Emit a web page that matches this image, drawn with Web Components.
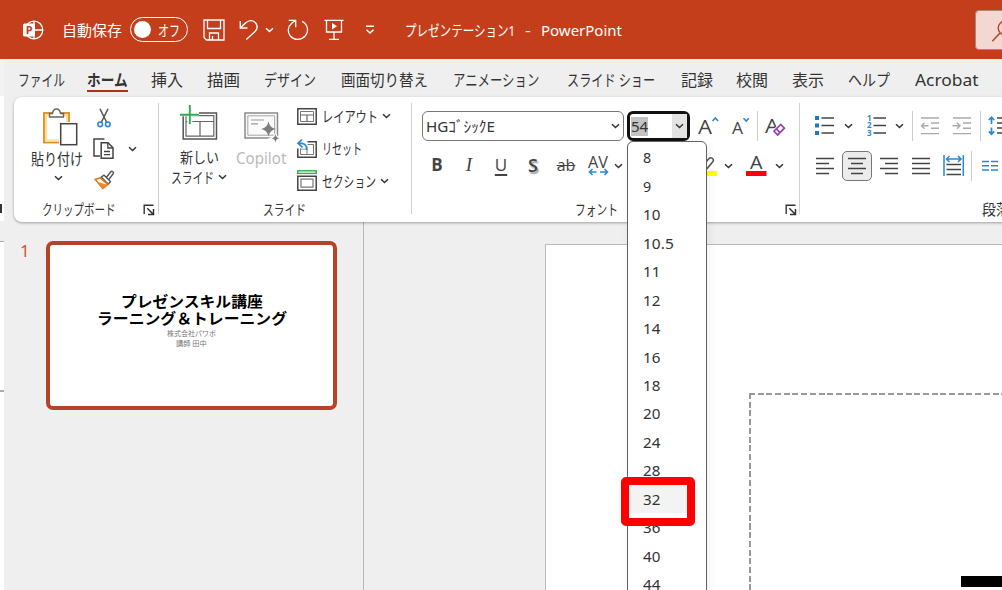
<!DOCTYPE html>
<html lang="ja">
<head>
<meta charset="utf-8">
<title>プレゼンテーション1 - PowerPoint</title>
<style>
  body {
    margin: 0;
    width: 1002px;
    height: 590px;
    overflow: hidden;
    background: #efefef;
    color: #333;
    font: 15px/20px "Noto Sans", "Noto Sans CJK JP", sans-serif;
  }
</style>
</head>
<body>
<office-window></office-window>

<script>
const chev = '<path d="M1 1.2L4.5 4.5 8 1.2" fill="none" stroke="currentColor" stroke-width="1.5"/>';
const monitor = '<path d="M.8.8H19.2V16.2H.8Z" fill="#fff" stroke="#444" stroke-width="1.5"/><path d="M3.5 3.5H16.5V13.5H3.5Z" fill="none" stroke="#777"/>';

// name: [width, height, markup]
const ICONS = {
  chevron: [9, 6, chev],
  logo: [22, 22, '<circle cx="12" cy="11" r="8.8" fill="none" stroke="#fff" stroke-width="1.3"/><path d="M12 2V20M12 11H21" stroke="#fff" stroke-width="1.3"/><rect x="1" y="4.5" width="12" height="13" rx="1.5" fill="#fff"/><text x="3.8" y="15" font-size="11" font-weight="bold" style="fill:#c43e1c">P</text>'],
  save: [22, 22, '<path d="M1 1H21V21H3.5L1 18.5ZM4.5 1.5V9.5H17.5V1.5M6.5 21V14H15.5V21M9.5 21V17" fill="none" stroke="#fff" stroke-width="1.3"/>'],
  undo: [20, 22, '<path d="M1.3 2V9H8.5M1.5 8.8L6.5 4C10 .7 14.5 1 16.8 4.2C19 7.3 18.2 10.5 15.5 13L7.3 20.5" fill="none" stroke="#fff" stroke-width="1.4"/>'],
  redo: [22, 22, '<path d="M1.7 1.3H8.7V8.2M8.5 1.5L4.7 4.3C.5 8 .2 13.5 3.5 17.2C7.5 21.5 14.5 21.3 18.2 17C22.3 12 20.7 5 15 2.3" fill="none" stroke="#fff" stroke-width="1.3"/>'],
  present: [20, 22, '<path d="M.5 1.3H19.5M2.5 1.3V13H17.5V1.3M10 13V20M5 20.3H15" fill="none" stroke="#fff" stroke-width="1.3"/><path d="M8 4L13 7.2L8 10.4Z" fill="#fff"/>'],
  qat: [10, 10, '<path d="M1 1.2H9M1.5 4.7L5 8L8.5 4.7" fill="none" stroke="#fff" stroke-width="1.5"/>'],
  search: [24, 24, '<circle cx="14" cy="8" r="6.8" fill="none" stroke="#b7472a" stroke-width="1.4"/><path d="M9 13L1.3 21.2" stroke="#b7472a" stroke-width="1.6"/>'],
  launcher: [12, 12, '<path d="M1.2 10V1.2H10.5" fill="none" stroke="#333" stroke-width="1.4"/><path d="M4.3 4.3L10 10M10.5 5V10.5H5" fill="none" stroke="#333" stroke-width="1.5"/>'],
  paste: [35, 38, '<rect x="1" y="5" width="25" height="29.5" fill="#fff" stroke="#dc8a17" stroke-width="1.8"/><rect x="3" y="7" width="21" height="25.5" fill="none" stroke="#fbdfa1" stroke-width="2.2"/><path d="M6.5 9V5.5H9.5C10 2.4 11.5 1 13.5 1S17 2.4 17.5 5.5H20.5V9Z" fill="#fff" stroke="#666" stroke-width="1.4"/><rect x="16" y="14" width="19" height="24" fill="#fff"/><rect x="17.7" y="15.7" width="16" height="21" fill="#fff" stroke="#444" stroke-width="1.5"/>'],
  cut: [14, 20, '<path d="M3 .8L9.8 14.5M11 .8L4.2 14.5" fill="none" stroke="#555" stroke-width="1.5"/><circle cx="3.2" cy="16.3" r="2.3" fill="#fff" stroke="#2b88d0" stroke-width="1.6"/><circle cx="10.8" cy="16.3" r="2.3" fill="#fff" stroke="#2b88d0" stroke-width="1.6"/>'],
  copy: [22, 22, '<path d="M7 18H1V1H11.5" fill="none" stroke="#444" stroke-width="1.5"/><path d="M8.2 4.8H15L20 9.8V20.3H8.2Z" fill="#fff" stroke="#444" stroke-width="1.5"/><path d="M14.8 5V10H20M11 13.5H17M11 16.6H17" fill="none" stroke="#444" stroke-width="1.3"/>'],
  brush: [21, 20, '<path d="M11.5 8.5L16.8 1.8C18 .5 20.3 2.3 19.2 3.8L14 10.5" fill="#fff" stroke="#555" stroke-width="1.4"/><path d="M7.2 7L10 5.2L16.5 11.5L14.3 14.2Z" fill="#fff" stroke="#555" stroke-width="1.3"/><path d="M6.2 7.8L1.2 9.5L8.8 18.5L13.8 14.4Z" fill="#fff" stroke="#e07b1a" stroke-width="1.6"/><path d="M3 11.8L12.5 14.5L9 18.3Z" fill="#ef8a26"/>'],
  newslide: [38, 36, '<path d="M3.2 8H36.5V34H3.2Z" fill="#fff" stroke="#555" stroke-width="1.5"/><path d="M6 10.7H33.8V31.2H6ZM6 16.5H34M20 16.5V31" fill="none" stroke="#666" stroke-width="1.2"/><path d="M1 8.8H19M9.8 0V19" stroke="#fff" stroke-width="5"/><path d="M0 9.8H19M9.8 0V19" stroke="#36a853" stroke-width="1.9"/>'],
  copilot: [36, 32, '<path d="M1 1H33.5V26H1Z" fill="#fafafa" stroke="#8a8a8a" stroke-width="1.5"/><path d="M3.8 3.8H30.7V23.2H3.8Z" fill="none" stroke="#a5a5a5"/><path d="M7 8H20M7 11.8H14" stroke="#999" stroke-width="1.2"/><path d="M24.5 9.5C25.8 14.2 27.2 15.6 32 17C27.2 18.4 25.8 19.8 24.5 24.5C23.2 19.8 21.8 18.4 17 17C21.8 15.6 23.2 14.2 24.5 9.5Z" fill="#7d7d7d"/><path d="M31.5 22C32.2 24.8 32.8 25.5 35.5 26.2C32.8 26.9 32.2 27.6 31.5 30.5C30.8 27.6 30.2 26.9 27.5 26.2C30.2 25.5 30.8 24.8 31.5 22Z" fill="#7d7d7d" stroke="#fff" stroke-width="2" paint-order="stroke"/>'],
  layout: [20, 17, monitor + '<path d="M3.5 7H16.5M10 7V13.5" stroke="#666" stroke-width="1.2"/>'],
  reset: [20, 19, '<g transform="translate(0 2)">' + monitor + '<path d="M10 5V13M3.5 8H9" stroke="#777"/></g><rect width="10.5" height="9.5" fill="#fff"/><path d="M5 .5L1 4.3L5.5 8.3M1.5 4.3H4.5C8.3 4.5 10 7 9.7 11" fill="none" stroke="#2b88d0" stroke-width="1.7"/>'],
  section: [20, 21, '<rect x=".8" y=".8" width="18.4" height="2.6" fill="#fff" stroke="#36a853" stroke-width="1.4"/><path d="M.8 6.2H19.2V20.2H.8Z" fill="#fff" stroke="#444" stroke-width="1.5"/><path d="M4 9.2H16V17.2H4Z" fill="none" stroke="#777" stroke-width="1.2"/>'],
  grow: [22, 20, '<text x="0" y="17.5" font-size="20.5" textLength="14" lengthAdjust="spacingAndGlyphs">A</text><path d="M14.5 5L17.3 2L20.1 5" fill="none" stroke="#2b88d0" stroke-width="1.6"/>'],
  shrink: [18, 20, '<text x="0" y="17.5" font-size="16.5" textLength="11" lengthAdjust="spacingAndGlyphs">A</text><path d="M11.5 2.2L14.2 5L16.9 2.2" fill="none" stroke="#2b88d0" stroke-width="1.6"/>'],
  clear: [22, 22, '<text x="0" y="18" font-size="20.5" textLength="14" lengthAdjust="spacingAndGlyphs">A</text><path d="M8.8 15.8L16 9.3L19.6 13L12.5 20Z" fill="#fff" stroke="#fff" stroke-width="3"/><path d="M9 16L15.8 9.5L19.4 13.2L12.6 20ZM11.4 13.8L15 17.6" fill="#fff" stroke="#9b3fa8" stroke-width="1.7"/>'],
  spacing: [22, 22, '<text x="0" y="12.5" font-size="15.5" textLength="20" lengthAdjust="spacingAndGlyphs">AV</text><path d="M1.5 17H19.5M4.5 14L1.5 17L4.5 20M16.5 14L19.5 17L16.5 20" fill="none" stroke="#2b88d0" stroke-width="1.6"/><path d="M8.5 15.5H12V18.5H8.5Z" fill="#fff"/>'],
  marker: [22, 22, '<path d="M4 14L13 3.5C15 1.5 18.5 3.8 17 6.500L9 16Z" fill="#fff" stroke="#555" stroke-width="1.5"/><rect x="0" y="16" width="21" height="5" fill="#ff0"/>'],
  fontcolor: [21, 22, '<text x="4" y="13.5" font-size="18" textLength="12.5" lengthAdjust="spacingAndGlyphs">A</text><rect x="0" y="16" width="20.5" height="5" fill="#f00"/>'],
  bullets: [20, 20, '<path d="M0 0H4V4H0ZM0 7.5H4V11.5H0ZM0 15H4V19H0Z" fill="#2077bd"/><path d="M6.5 2H19M6.5 9.5H19M6.5 17H19" stroke="#444" stroke-width="1.6"/>'],
  numbers: [20, 22, '<g font-size="8" font-weight="bold" fill="#2b88d0"><text x="0" y="5.8">1</text><text x="0" y="13.4">2</text><text x="0" y="21">3</text></g><path d="M6.5 3H19M6.5 10.5H19M6.5 18H19" stroke="#444" stroke-width="1.6"/>'],
  outdent: [20, 18, '<path d="M1 1H19M11 6H19M11 11.3H19M1 16.6H19M8.5 8.7H1.5M4.5 5.7L1.5 8.7L4.5 11.7" fill="none" stroke="#aaa" stroke-width="1.4"/>'],
  indent: [20, 18, '<path d="M1 1H19M11 6H19M11 11.3H19M1 16.6H19M.5 8.7H8M5 5.7L8 8.7L5 11.7" fill="none" stroke="#aaa" stroke-width="1.4"/>'],
  linespace: [22, 20, '<path d="M3.5 1.5V8M.8 4L3.5 1.2L6.2 4M3.5 11.5V18M.8 15.3L3.5 18.2L6.2 15.3" fill="none" stroke="#2b88d0" stroke-width="1.7"/><path d="M9 2H22M9 7H22M9 12H22M9 17H22" stroke="#444" stroke-width="1.5"/>'],
  left: [19, 18, '<path d="M0 1.5H18M0 6.5H13M0 11.5H18M0 16.5H13" stroke="#444" stroke-width="1.6"/>'],
  center: [19, 18, '<path d="M0 1.5H18M3 6.5H15M0 11.5H18M3 16.5H15" stroke="#444" stroke-width="1.6"/>'],
  right: [19, 18, '<path d="M0 1.5H18M5 6.5H18M0 11.5H18M5 16.5H18" stroke="#444" stroke-width="1.6"/>'],
  justify: [19, 18, '<path d="M0 1.5H18M0 6.5H18M0 11.5H18M0 16.5H18" stroke="#444" stroke-width="1.6"/>'],
  distribute: [22, 22, '<path d="M1 0V21M20.3 0V21M3.5 4H18M6.5 1L3.5 4L6.5 7M15 1L18 4L15 7" fill="none" stroke="#2b88d0" stroke-width="1.5"/><path d="M3.5 9.5H18M3.5 14.5H18M3.5 19.5H18" stroke="#444" stroke-width="1.6"/>'],
  columns: [17, 12, '<path d="M0 1.5H7M9 1.5H16M0 5.7H7M9 5.7H16M0 10H7M9 10H16" stroke="#2b88d0" stroke-width="1.6"/>']
};

class OfficeIcon extends HTMLElement {

  connectedCallback() {
    const [w, h, markup] = ICONS[this.getAttribute("name")];
    this.attachShadow({mode: "open"}).innerHTML = `
      <style>
        :host { display: block; flex: none; width: ${w}px; height: ${h}px; }
        svg { display: block; overflow: visible; }
        text { fill: #444; font-family: "Open Sans", sans-serif; }
        g text { fill: inherit; }
      </style>
      <svg width="${w}" height="${h}" viewBox="0 0 ${w} ${h}">${markup}</svg>`;
  }
}

// Label squeezed or stretched to the width in its w attribute
class FitLabel extends HTMLElement {

  connectedCallback() {
    const w = Number(this.getAttribute("w"));
    this.attachShadow({mode: "open"}).innerHTML = `
      <style>
        :host { display: block; flex: none; width: ${w}px; height: 20px; line-height: 20px; white-space: nowrap; }
        span { display: inline-block; transform-origin: 0 50%; }
      </style>
      <span><slot></slot></span>`;
    const span = this.shadowRoot.querySelector("span");
    span.style.transform = `scaleX(${w / span.offsetWidth})`;
  }
}

class TitleBar extends HTMLElement {

  connectedCallback() {
    this.attachShadow({mode: "open"}).innerHTML = `
      <style>
        :host { display: flex; align-items: center; height: 59px; padding-left: 22px; background: #c43e1c; color: #fff; overflow: hidden; box-sizing: border-box; }
        .toggle { display: flex; flex: none; align-items: center; box-sizing: border-box; width: 58px; height: 25px; margin: 0 15px 0 8px; padding-left: 3px; border: 1.5px solid #fff; border-radius: 13px; }
        .knob { width: 17px; height: 17px; margin-right: 7px; border-radius: 50%; background: #fff; }
        .search { flex: none; box-sizing: border-box; width: 60px; height: 40px; margin-left: 353px; padding: 9px 0 0 15px; border: 1.5px solid #a5887e; border-radius: 4px; background: #f3d8d1; }
      </style>
      <office-icon name="logo"></office-icon>
      <fit-label w="60" style="margin-left:18px">自動保存</fit-label>
      <div class="toggle"><div class="knob"></div><fit-label w="22">オフ</fit-label></div>
      <office-icon name="save"></office-icon>
      <office-icon name="undo" style="margin-left:14px"></office-icon>
      <office-icon name="chevron" style="margin-left:6px"></office-icon>
      <office-icon name="redo" style="margin-left:13px"></office-icon>
      <office-icon name="present" style="margin-left:15px"></office-icon>
      <office-icon name="qat" style="margin-left:21px"></office-icon>
      <fit-label w="110" style="margin-left:30px">プレゼンテーション1</fit-label>
      <fit-label w="6" style="margin-left:10px">-</fit-label>
      <fit-label w="81" style="margin-left:10px">PowerPoint</fit-label>
      <div class="search"><office-icon name="search"></office-icon></div>`;
  }
}

class RibbonTabs extends HTMLElement {

  connectedCallback() {
    const tabs = [["ファイル", 47], ["ホーム", 41], ["挿入", 32], ["描画", 33], ["デザイン", 52], ["画面切り替え", 87], ["アニメーション", 86],
      ["スライド ショー", 88], ["記録", 32], ["校閲", 32], ["表示", 32], ["ヘルプ", 42], ["Acrobat", 63]];
    const gaps = [18, 22, 23, 24, 24, 25, 25, 28, 26, 23, 24, 24, 25];
    this.attachShadow({mode: "open"}).innerHTML = `
      <style>
        :host { display: flex; height: 38px; padding-top: 11px; box-sizing: border-box; font-size: 16px; }
        .active { height: 20px; border-bottom: 2.5px solid #a8351b; font-weight: 700; }
      </style>
      ${tabs.map(([t, w], i) => `<fit-label w="${w}" class="${i == 1 ? "active" : ""}" style="margin-left:${gaps[i]}px">${t}</fit-label>`).join("")}`;
  }
}

class RibbonGroup extends HTMLElement {

  connectedCallback() {
    const launcher = this.getAttribute("launcher");
    this.attachShadow({mode: "open"}).innerHTML = `
      <style>
        :host { display: flex; flex: none; flex-direction: column; box-sizing: border-box; width: ${this.getAttribute("w")}px; height: 111px; margin-top: 6px; border-right: 1px solid #d0d0d0; }
        .body { height: 96px; flex: none; }
        footer { display: flex; height: 20px; padding-left: ${this.getAttribute("indent")}px; font-size: 14.5px; }
      </style>
      <div class="body"><slot></slot></div>
      <footer>
        <fit-label w="${this.getAttribute("lw")}">${this.getAttribute("label")}</fit-label>
        ${launcher ? `<office-icon name="launcher" style="margin:5px 0 0 ${launcher}px"></office-icon>` : ""}
      </footer>`;
  }
}

class FontSizeBox extends HTMLElement {

  connectedCallback() {
    const sizes = ["8", "9", "10", "10.5", "11", "12", "14", "16", "18", "20", "24", "28", "32", "36", "40", "44"];
    this.attachShadow({mode: "open"}).innerHTML = `
      <style>
        :host { display: block; flex: none; position: relative; width: 63px; height: 30px; }
        .box { display: flex; align-items: center; box-sizing: border-box; height: 30px; border: 3px solid #111; border-radius: 6px; background: #fff; }
        .value { display: flex; align-items: center; width: 17px; height: 19px; margin-left: 1px; background: #c3c3c3; }
        .arrow { display: flex; align-items: center; justify-content: center; width: 15px; height: 24px; margin-left: auto; background: #e3e3e3; }
        .menu { position: absolute; z-index: 2; left: 0; top: 30px; width: 80px; height: 460px; box-sizing: border-box; padding-top: 1px; background: #fff; border: 1.5px solid #626262; border-radius: 6px 6px 0 0; box-shadow: 2px 2px 8px #0001; }
        .item { display: flex; align-items: center; width: 62px; height: 28.47px; box-sizing: border-box; padding-left: 14.5px; }
        .hover { background: #f3f3f3; }
        .mark { position: absolute; z-index: 3; left: -6px; top: 366px; box-sizing: border-box; width: 74px; height: 49px; border: 8px solid #f00; border-radius: 5px; }
      </style>
      <div class="box">
        <div class="value"><fit-label w="17">54</fit-label></div>
        <div class="arrow"><office-icon name="chevron"></office-icon></div>
      </div>
      <div class="menu">
        ${sizes.map(s => `<div class="item ${s == "32" ? "hover" : ""}"><fit-label w="${s == "10.5" ? 31 : s.length * 8.6}">${s}</fit-label></div>`).join("")}
      </div>
      <div class="mark"></div>`;
  }
}

class OfficeRibbon extends HTMLElement {

  connectedCallback() {
    this.attachShadow({mode: "open"}).innerHTML = `
      <style>
        :host { display: flex; position: relative; z-index: 1; width: 1000px; height: 125px; margin-left: 14px; background: #fff; border-radius: 8px 0 0 8px; box-shadow: 0 1px 3px #0005; }
        .row { display: flex; align-items: center; }
        .row > *, .cols > * { flex: none; }
        .cols { display: flex; align-items: flex-start; }
        .stack { display: flex; flex-direction: column; align-items: center; }
        .sep { width: 1px; height: 30px; background: #ccc; }
        .font { display: flex; align-items: center; justify-content: space-between; box-sizing: border-box; width: 202px; height: 30px; padding: 0 3px; border: 1.5px solid #777; border-radius: 6px; }
        .on { display: flex; align-items: center; justify-content: center; box-sizing: border-box; width: 30px; height: 30px; border: 1.5px solid #777; border-radius: 5px; background: #ececec; }
        .letter { width: 14px; height: 24px; text-align: center; font: 17px/22px "Open Sans", sans-serif; color: #444; }
        .bold { font-weight: 700; }
        .italic { font-family: "Liberation Serif", serif; font-style: italic; font-size: 19px; }
        .under { text-decoration: underline; text-underline-offset: 3px; text-decoration-thickness: 1.5px; }
        .shadow { font-weight: 600; text-shadow: 1.5px 1.5px 1.5px #999; font-size: 18px; }
        .strike { width: 20px; font-size: 16px; text-decoration: line-through; }
        .muted { color: #bbb; }
      </style>
      <ribbon-group w="145" label="クリップボード" indent="28" lw="74" launcher="27">
        <div class="cols">
          <div class="stack" style="width:53px;margin:5px 0 0 16px">
            <office-icon name="paste" style="margin-left:7px"></office-icon>
            <fit-label w="52" style="margin-top:3px;font-size:16px">貼り付け</fit-label>
            <office-icon name="chevron" style="margin:6px 0 0 3px"></office-icon>
          </div>
          <div class="stack" style="width:22px;margin:5px 0 0 10px">
            <office-icon name="cut"></office-icon>
            <office-icon name="copy" style="margin-top:10px"></office-icon>
            <office-icon name="brush" style="margin-top:10px"></office-icon>
          </div>
          <office-icon name="chevron" style="margin:43px 0 0 13px"></office-icon>
        </div>
      </ribbon-group>

      <ribbon-group w="253" label="スライド" indent="104" lw="43">
        <div class="cols">
          <div class="stack" style="width:56px;margin:2px 0 0 12px">
            <office-icon name="newslide"></office-icon>
            <fit-label w="39" style="margin-top:6px">新しい</fit-label>
            <div class="row" style="height:19px">
              <fit-label w="43">スライド</fit-label><office-icon name="chevron" style="margin-left:4px"></office-icon>
            </div>
          </div>
          <div class="stack muted" style="width:50px;margin:9px 0 0 9px">
            <office-icon name="copilot" style="margin-left:2px"></office-icon>
            <fit-label w="50" style="margin-top:4px;font-size:16px">Copilot</fit-label>
          </div>
          <div style="margin:-3px 0 0 11px">
            <div class="row" style="height:32px"><office-icon name="layout"></office-icon><fit-label w="56" style="margin-left:5px">レイアウト</fit-label><office-icon name="chevron" style="margin-left:4px"></office-icon></div>
            <div class="row" style="height:32px"><office-icon name="reset"></office-icon><fit-label w="40" style="margin-left:5px">リセット</fit-label></div>
            <div class="row" style="height:33px"><office-icon name="section"></office-icon><fit-label w="54" style="margin-left:5px">セクション</fit-label><office-icon name="chevron" style="margin-left:4px"></office-icon></div>
          </div>
        </div>
      </ribbon-group>

      <ribbon-group w="388" label="フォント" indent="163" lw="43" launcher="167">
        <div class="row" style="height:30px;padding:8px 0 0 10px">
          <div class="font"><fit-label w="69">HGｺﾞｼｯｸE</fit-label><office-icon name="chevron"></office-icon></div>
          <font-size-box style="margin-left:3px"></font-size-box>
          <office-icon name="grow" style="margin-left:8px"></office-icon>
          <office-icon name="shrink" style="margin-left:12px"></office-icon>
          <div class="sep" style="margin-left:7px"></div>
          <office-icon name="clear" style="margin-left:7px"></office-icon>
        </div>
        <div class="row" style="height:30px;padding:10px 0 0 18px">
          <div class="letter bold">B</div>
          <div class="letter italic" style="margin-left:18px">I</div>
          <div class="letter under" style="margin-left:18px">U</div>
          <div class="letter shadow" style="margin-left:18px">S</div>
          <div class="letter strike" style="margin-left:16px">ab</div>
          <office-icon name="spacing" style="margin-left:12px"></office-icon>
          <office-icon name="chevron" style="margin-left:4px"></office-icon>
          <office-icon name="marker" style="margin-left:73px"></office-icon>
          <office-icon name="chevron" style="margin-left:6px"></office-icon>
          <office-icon name="fontcolor" style="margin-left:13px"></office-icon>
          <office-icon name="chevron" style="margin-left:8px"></office-icon>
        </div>
      </ribbon-group>

      <ribbon-group w="240" label="段落" indent="182" lw="28">
        <div class="row" style="height:30px;padding:8px 0 0 15px">
          <office-icon name="bullets"></office-icon>
          <office-icon name="chevron" style="margin-left:9px"></office-icon>
          <office-icon name="numbers" style="margin-left:14px"></office-icon>
          <office-icon name="chevron" style="margin-left:8px"></office-icon>
          <div class="sep" style="margin-left:8px"></div>
          <office-icon name="outdent" style="margin-left:7px"></office-icon>
          <office-icon name="indent" style="margin-left:12px"></office-icon>
          <div class="sep" style="margin-left:8px"></div>
          <office-icon name="linespace" style="margin-left:7px"></office-icon>
        </div>
        <div class="row" style="height:30px;padding:10px 0 0 16px">
          <office-icon name="left"></office-icon>
          <div class="on" style="margin-left:7px"><office-icon name="center"></office-icon></div>
          <office-icon name="right" style="margin-left:8px"></office-icon>
          <office-icon name="justify" style="margin-left:13px"></office-icon>
          <office-icon name="distribute" style="margin-left:12px"></office-icon>
          <div class="sep" style="margin-left:6px"></div>
          <office-icon name="columns" style="margin-left:10px"></office-icon>
        </div>
      </ribbon-group>`;
  }
}

class SlideThumb extends HTMLElement {

  connectedCallback() {
    this.attachShadow({mode: "open"}).innerHTML = `
      <style>
        :host { display: flex; flex-direction: column; align-items: center; box-sizing: border-box; width: 291px; height: 169px; padding-top: 48px; border: 4px solid #b7422a; border-radius: 7px; background: #fff; color: #000; }
        .title { height: 16.5px; line-height: 16.5px; font-size: 15px; font-weight: 700; }
        .sub { height: 10px; line-height: 10px; font-size: 7px; color: #777; }
      </style>
      <fit-label class="title" w="142">プレゼンスキル講座</fit-label>
      <fit-label class="title" w="190" style="margin-bottom:3px">ラーニング＆トレーニング</fit-label>
      <fit-label class="sub" w="49">株式会社パワポ</fit-label>
      <fit-label class="sub" w="31">講師 田中</fit-label>`;
  }
}

class SlideWorkspace extends HTMLElement {

  connectedCallback() {
    this.attachShadow({mode: "open"}).innerHTML = `
      <style>
        :host { display: flex; height: 368px; }
        nav { display: flex; flex: none; box-sizing: border-box; width: 364px; padding: 19px 0 0 20px; border-right: 1.5px solid #b8b8b8; }
        .num { width: 26px; font-size: 17px; color: #d35036; }
        main { flex: none; box-sizing: border-box; width: 460px; height: 360px; margin: 22px 0 0 181px; padding: 148px 0 0 203px; background: #fff; border: 1px solid #bbb; }
        .holder { box-sizing: border-box; width: 300px; height: 260px; padding: 183px 0 0 212px; }
        .holder { background:
            repeating-linear-gradient(90deg, #999 0 6px, #fff0 6px 8.7px) 0 0 / 100% 2px no-repeat,
            repeating-linear-gradient(#999 0 6px, #fff0 6px 8.7px) 0 0 / 2px 100% no-repeat; }
        .ink { height: 11px; background: #000; }
      </style>
      <nav><div class="num">1</div><slide-thumb></slide-thumb></nav>
      <main><div class="holder"><div class="ink"></div></div></main>`;
  }
}

// Sliver of the window lying behind, seen along the left edge
class BackWindow extends HTMLElement {

  connectedCallback() {
    this.attachShadow({mode: "open"}).innerHTML = `
      <style>
        :host { position: absolute; left: 0; top: 59px; width: 4px; height: 531px; display: flex; flex-direction: column; overflow: hidden; }
        .tabs { height: 37px; background: #f2f2f2; }
        .ribbon { height: 125px; background: #fff; padding-top: 108px; box-sizing: border-box; }
        .bit { width: 2px; height: 9px; background: #333; }
        .gap { height: 20px; background: #efefef; border-bottom: 1.5px solid #aaa; }
        .slide { height: 148px; background: #fff; border-bottom: 2px solid #aaa; }
        .rest { flex: 1; background: #fff; }
      </style>
      <div class="tabs"></div><div class="ribbon"><div class="bit"></div></div><div class="gap"></div><div class="slide"></div><div class="rest"></div>`;
  }
}

class OfficeWindow extends HTMLElement {

  connectedCallback() {
    this.attachShadow({mode: "open"}).innerHTML = `
      <style>
        :host { display: block; position: relative; width: 1002px; height: 590px; overflow: hidden; background: #efefef; }
      </style>
      <title-bar></title-bar>
      <ribbon-tabs></ribbon-tabs>
      <office-ribbon></office-ribbon>
      <slide-workspace></slide-workspace>
      <back-window></back-window>`;
  }
}

customElements.define("office-icon", OfficeIcon);
customElements.define("fit-label", FitLabel);
customElements.define("title-bar", TitleBar);
customElements.define("ribbon-tabs", RibbonTabs);
customElements.define("ribbon-group", RibbonGroup);
customElements.define("font-size-box", FontSizeBox);
customElements.define("office-ribbon", OfficeRibbon);
customElements.define("slide-thumb", SlideThumb);
customElements.define("slide-workspace", SlideWorkspace);
customElements.define("back-window", BackWindow);
customElements.define("office-window", OfficeWindow);
</script>
</body>
</html>
